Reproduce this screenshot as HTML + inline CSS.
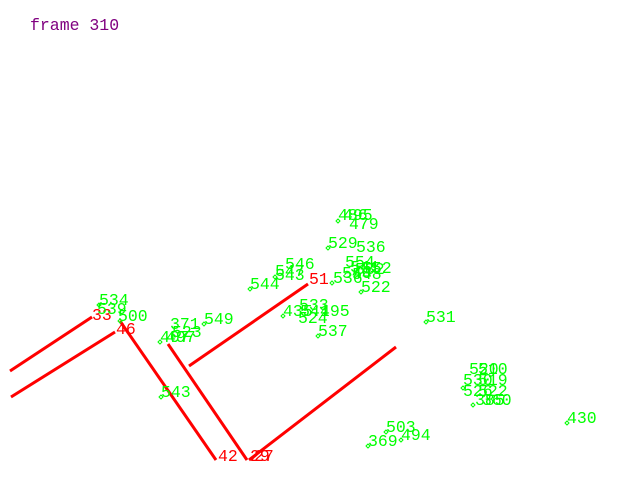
<!DOCTYPE html>
<html><head><style>html,body{margin:0;padding:0;background:#fff;width:640px;height:480px;overflow:hidden}</style></head>
<body>
<svg width="640" height="480" xmlns="http://www.w3.org/2000/svg" font-family="Liberation Mono, monospace" font-size="16.5">
<rect width="640" height="480" fill="#fff"/>
<text x="30" y="30" fill="#800080">frame 310</text>
<g stroke="#f00" stroke-width="3" fill="none">
<line x1="10" y1="371" x2="92" y2="317"/>
<line x1="11" y1="397" x2="115" y2="332"/>
<line x1="120" y1="321" x2="216" y2="460"/>
<line x1="168" y1="344" x2="247" y2="460"/>
<line x1="189" y1="366" x2="308" y2="284"/>
<line x1="249" y1="460" x2="396" y2="347"/>
</g>
<g fill="#f00">
<text x="92" y="320">33</text>
<text x="116" y="334">46</text>
<text x="309" y="284">51</text>
<text x="218" y="461">42</text>
<text x="250" y="461">29</text>
<text x="254" y="461">27</text>
</g>
<g fill="#0f0">
<text x="99" y="305">534</text>
<text x="97" y="314">539</text>
<text x="118" y="321">500</text>
<text x="170" y="329">371</text>
<text x="172" y="337">523</text>
<text x="160" y="342">407</text>
<text x="166" y="342">497</text>
<text x="204" y="324">549</text>
<text x="161" y="397">543</text>
<text x="250" y="289">544</text>
<text x="285" y="269">546</text>
<text x="275" y="276">547</text>
<text x="275" y="280">543</text>
<text x="328" y="248">529</text>
<text x="356" y="252">536</text>
<text x="338" y="220">486</text>
<text x="343" y="220">495</text>
<text x="349" y="229">479</text>
<text x="345" y="267">554</text>
<text x="350" y="272">541</text>
<text x="355" y="274">532</text>
<text x="362" y="273">552</text>
<text x="342" y="278">540</text>
<text x="333" y="283">536</text>
<text x="352" y="279">548</text>
<text x="361" y="292">522</text>
<text x="299" y="310">533</text>
<text x="283" y="316">435</text>
<text x="300" y="316">541</text>
<text x="320" y="316">495</text>
<text x="298" y="323">524</text>
<text x="318" y="336">537</text>
<text x="426" y="322">531</text>
<text x="469" y="374">520</text>
<text x="478" y="374">510</text>
<text x="478" y="385">519</text>
<text x="463" y="385">530</text>
<text x="463" y="396">526</text>
<text x="478" y="396">522</text>
<text x="475" y="405">385</text>
<text x="482" y="405">360</text>
<text x="567" y="423">430</text>
<text x="386" y="432">503</text>
<text x="401" y="440">494</text>
<text x="368" y="446">369</text>
</g>
<path fill="none" stroke="#0f0" stroke-width="1" d="M97 305l2-2 2 2-2 2z M118 321l2-2 2 2-2 2z M158 342l2-2 2 2-2 2z M202 324l2-2 2 2-2 2z M159 397l2-2 2 2-2 2z M248 289l2-2 2 2-2 2z M273 277l2-2 2 2-2 2z M326 248l2-2 2 2-2 2z M336 221l2-2 2 2-2 2z M330 283l2-2 2 2-2 2z M359 292l2-2 2 2-2 2z M281 316l2-2 2 2-2 2z M316 336l2-2 2 2-2 2z M424 322l2-2 2 2-2 2z M461 388l2-2 2 2-2 2z M471 405l2-2 2 2-2 2z M565 423l2-2 2 2-2 2z M384 432l2-2 2 2-2 2z M399 440l2-2 2 2-2 2z M366 446l2-2 2 2-2 2z"/>
</svg>
</body></html>
